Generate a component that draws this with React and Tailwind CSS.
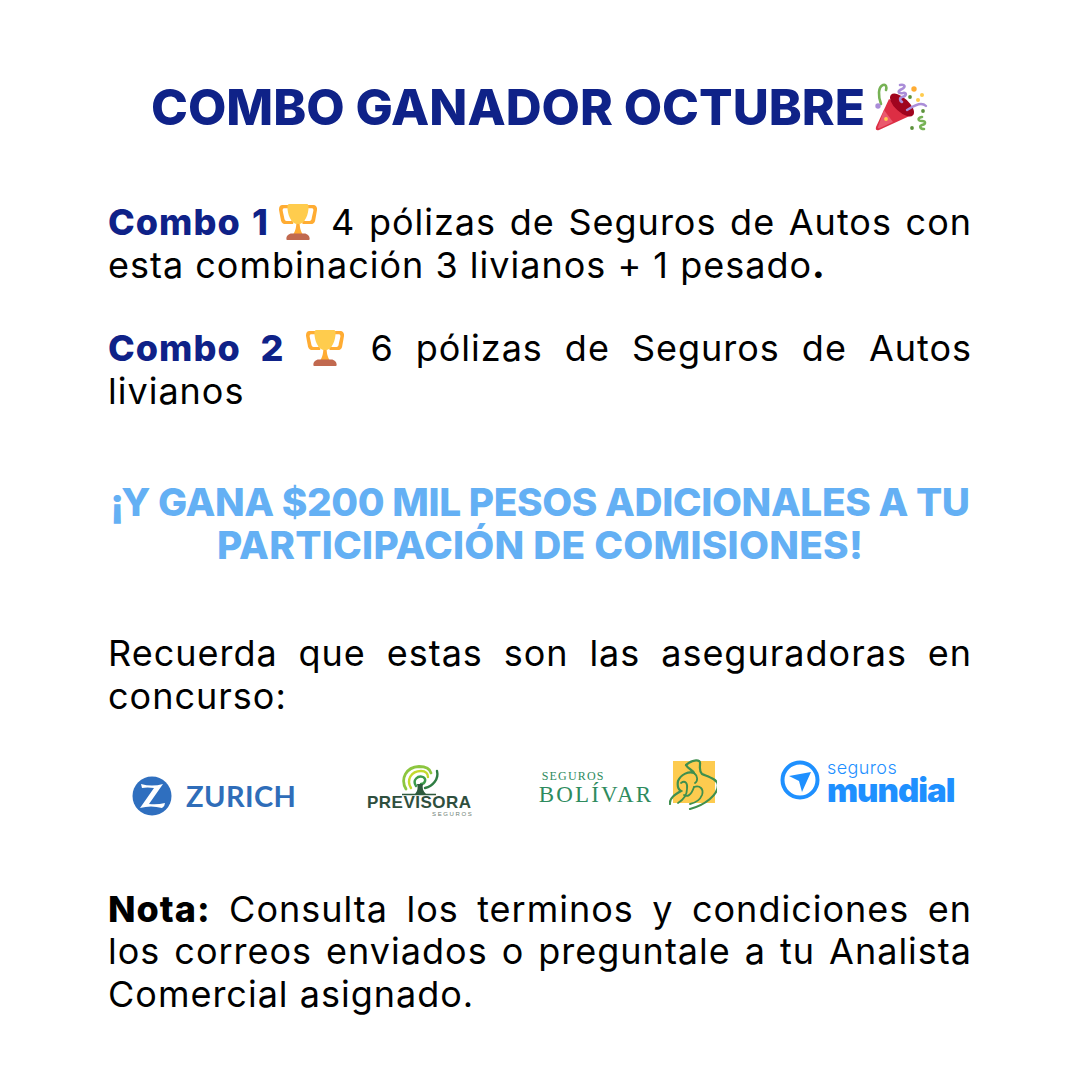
const Trophy = ({ className }) => (
  <svg viewBox="0 0 36 36" className={className}>
    <path fill="#FFAC33" d="M5.123 5h6C12.227 5 13 4.896 13 6V4c0-1.104-.773-2-1.877-2h-8c-2 0-3.583 2.125-3 5 0 0 1.791 9.375 1.917 9.958C2.373 18.5 4.164 20 6.081 20h6.958c1.105 0-.039-1.896-.039-3v-2c0 1.104-.773 2-1.877 2h-4c-1.104 0-1.833-1.042-2-2S3.539 7.667 3.539 7.667C3.206 5.75 4.018 5 5.123 5zm25.812 0h-6C23.831 5 22 4.896 22 6V4c0-1.104 1.831-2 2.935-2h8c2 0 3.584 2.125 3 5 0 0-1.633 9.419-1.771 10-.354 1.5-2.042 3-4 3h-7.146C21.914 20 22 18.104 22 17v-2c0 1.104 1.831 2 2.935 2h4c1.104 0 1.834-1.042 2-2s1.584-7.333 1.584-7.333C32.851 5.75 32.04 5 30.935 5z" />
    <path fill="#FFAC33" d="M23 30c-3-3-3.5-9-3.5-13h-3c0 4-.5 10-3.500 13z" />
    <path fill="#FFCC4D" d="M28 4c0-1.104.06-3-2-3H10C8 1 8 2.896 8 4c0 6 3 16 10 16s10-10 10-16z" />
    <path fill="#C1694F" d="M29 33.500c0 1.104.227 1.500-.877 1.500H7.877C6.800 35 7 34.604 7 33.500c0-2.200 2.400-4.500 5-4.500h12c2.600 0 5 2.300 5 4.500z" />
  </svg>
);

const Popper = ({ className }) => (
  <svg viewBox="0 0 54 50" className={className}>
    <path fill="#DD2E44" d="M14 17 L1 45 Q0 49 4 48 L39 32 Z" />
    <path fill="#EA596E" d="M9 28 L3 45 Q2 47 5 46 L18 40 Z" />
    <ellipse cx="27" cy="23" rx="7" ry="15" transform="rotate(-47 27 23)" fill="#A0041E" />
    <path fill="none" stroke="#77B255" strokeWidth="2.6" strokeLinecap="round" d="M6 22 C3 14 3 5 8 3 C11 2 12 5 11 8" />
    <circle cx="3" cy="24" r="2.7" fill="#AA8DD8" />
    <circle cx="11" cy="37" r="1.9" fill="#FFCC4D" />
    <path fill="none" stroke="#AA8DD8" strokeWidth="2.6" strokeLinecap="round" d="M25 3 C30 2 31 5 27 7 C22 9 23 12 28 11 C32 10 32 14 27 15 C24 16 25 19 27 20" />
    <circle cx="39" cy="7" r="2.7" fill="#FFAC33" />
    <circle cx="47" cy="13" r="2" fill="#FFCC4D" />
    <circle cx="43" cy="18" r="2" fill="#FFCC4D" />
    <circle cx="35" cy="15" r="1.9" fill="#5C913B" />
    <circle cx="48" cy="29" r="1.9" fill="#5C913B" />
    <circle cx="37" cy="46" r="1.9" fill="#5C913B" />
    <path fill="none" stroke="#AA8DD8" strokeWidth="2.4" strokeLinecap="round" d="M32 28 C37 25 41 22 46 22 C49 22 50 23 51 24" />
    <path fill="none" stroke="#77B255" strokeWidth="2.6" strokeLinecap="round" d="M47 35 C42 36 43 39 47 39 C51 39 51 42 47 43 C44 44 45 47 49 47" />
  </svg>
);

const Zurich = () => (
  <div className="flex items-center w-[170px] h-[40px]">
    <svg viewBox="0 0 40 40" className="w-[40px] h-[40px] shrink-0">
      <circle cx="20" cy="20" r="19.5" fill="#2F6FBF" />
      <path fill="#fff" d="M9 8 Q20 11 31 8 L17 28 Q25 29 33 27 Q33 30 30 32 Q19 29 8 32 L22 12 Q15 11 10 12 Z" />
    </svg>
    <span className="ml-[14px] text-[29px] leading-none font-bold text-[#2F6DB9] tracking-[0.4px] font-['Lato',sans-serif]">ZURICH</span>
  </div>
);

const Previsora = () => (
  <div className="flex flex-col items-center w-[108px] h-[54px]">
    <svg viewBox="0 0 44 31" className="w-[44px] h-[31px] shrink-0">
      <path fill="none" stroke="#8CC63F" strokeWidth="2.8" strokeLinecap="round" d="M9 24 C3 14 9 2 22 1.5 C29 1.5 33 4 34 8" />
      <path fill="none" stroke="#C3D82E" strokeWidth="2.4" strokeLinecap="round" d="M14 23 C9 15 14 6 24 6 C29 6 31 9 31 12" />
      <path fill="none" stroke="#2F7D43" strokeWidth="2.4" strokeLinecap="round" d="M40 6 C42 14 36 21 28 23" />
      <path fill="none" stroke="#3C9A4A" strokeWidth="2.4" strokeLinecap="round" d="M19 21 C15 15 21 10 26 12 C30 14 28 19 24 19" />
      <path fill="#2E5A3C" d="M18 29 C21 26 21 22 20 19 L26 19 C25 23 26 26 29 29 Z" />
      <path stroke="#2E5A3C" strokeWidth="1.3" d="M5 29.5 H39" />
    </svg>
    <span className="text-[17px] leading-[14px] tracking-[0.5px] font-bold text-[#2F4F3E] font-['Liberation_Sans',sans-serif] whitespace-nowrap">PREVISORA</span>
    <span className="self-end text-[6px] leading-[8px] tracking-[1.6px] text-[#6F7F75] font-['Liberation_Sans',sans-serif]">SEGUROS</span>
  </div>
);

const Bolivar = () => (
  <div className="flex items-start w-[178px] h-[52px]">
    <div className="flex flex-col w-[130px] pt-[10px] font-['Liberation_Serif',serif] text-[#2E8B5E]">
      <span className="text-[12px] leading-[14px] tracking-[1.2px] pl-[3px]">SEGUROS</span>
      <span className="text-[23px] leading-[24px] tracking-[2.2px]">BOLÍVAR</span>
    </div>
    <svg viewBox="0 0 48 52" className="w-[48px] h-[52px] shrink-0">
      <path fill="#FDCB4F" d="M4 2 H46 V44 H4 Z" />
      <g fill="none" stroke="#3F8F4E" strokeWidth="1.8" strokeLinecap="round">
        <path d="M17 6 C24 0 32 0 31 5 C31 10 30 12 33 15 C40 18 48 20 49 26 C49 36 36 46 21 50" strokeWidth="2.2" />
        <path d="M17 6 C19 10 24 11 25 14 C20 12 12 15 9 22 C8 28 10 31 12 32 C7 35 0 39 1 45" strokeWidth="2.2" />
        <path d="M25 14 C29 17 29 22 26 24" />
        <path d="M12 24 C16 21 19 24 18 30 C18 36 14 41 9 44" />
        <path d="M25 28 C31 26 35 30 33 36 C31 41 26 44 21 45" />
        <path d="M15 36 C18 38 22 37 25 28" />
      </g>
    </svg>
  </div>
);

const Mundial = () => (
  <div className="flex items-start w-[176px] h-[46px] text-[#1E90FF]">
    <svg viewBox="0 0 40 40" className="w-[40px] h-[40px] shrink-0">
      <circle cx="20" cy="20" r="17.5" fill="none" stroke="#1E90FF" strokeWidth="4" />
      <path fill="#1E90FF" d="M9 16 L31 12 L22 32 L19 21 Z" />
    </svg>
    <div className="flex flex-col ml-[7px] font-['Inter',sans-serif]">
      <span className="text-[18px] leading-[15px] font-light tracking-[0.4px]">seguros</span>
      <span className="text-[33px] leading-[30px] font-black tracking-[-1px]">mundial</span>
    </div>
  </div>
);

const Line = ({ children }) => <span className="block [text-align-last:justify]">{children}</span>;

export default function App() {
  return (
    <div className="w-[1080px] h-[1080px] bg-white px-[108px] pt-[76px] text-black font-['Inter',sans-serif] text-[36px] leading-[42.6px] tracking-[1px]">
      <div className="flex items-center justify-center -mx-[20px] h-[62px]">
        <h1 className="text-[49.7px] leading-[62px] font-extrabold text-[#0F2288] tracking-[0px] whitespace-nowrap">COMBO GANADOR OCTUBRE</h1>
        <Popper className="w-[54px] h-[50px] ml-[10px] -mt-[1px] shrink-0" />
      </div>

      <p className="mt-[63px]">
        <Line>
          <b className="font-extrabold text-[#0F2288]">Combo 1</b>
          <Trophy className="inline-block w-[38px] h-[38px] ml-[10px] mr-[14px] align-[-6px]" />
          4 pólizas de Seguros de Autos con
        </Line>
        esta combinación 3 livianos + 1 pesado<b className="font-extrabold">.</b>
      </p>

      <p className="mt-[41px]">
        <Line>
          <b className="font-extrabold text-[#0F2288]">Combo 2</b>{" "}
          <Trophy className="inline-block w-[38px] h-[38px] mr-[4px] align-[-6px]" />{" "}
          6 pólizas de Seguros de Autos
        </Line>
        livianos
      </p>

      <h2 className="mt-[68px] text-center text-[#64B0F4] text-[38.8px] leading-[43px] font-extrabold tracking-[-0.4px] -mx-[10px]">
        <span className="block">¡Y GANA $200 MIL PESOS ADICIONALES A TU</span>
        <span className="block tracking-[0.25px]">PARTICIPACIÓN DE COMISIONES!</span>
      </h2>

      <p className="mt-[66px]">
        <Line>Recuerda que estas son las aseguradoras en</Line>
        concurso:
      </p>

      <div className="mt-[46px] -mx-[4px] pl-[28px] pr-[20px] h-[64px] flex items-start justify-between">
        <div className="mt-[12px]"><Zurich /></div>
        <div className="mt-[1px]"><Previsora /></div>
        <div className="-mt-[5px] ml-[2px]"><Bolivar /></div>
        <div className="-mt-[4px]"><Mundial /></div>
      </div>

      <p className="mt-[60px]">
        <Line><b className="font-extrabold">Nota:</b> Consulta los terminos y condiciones en</Line>
        <Line>los correos enviados o preguntale a tu Analista</Line>
        Comercial asignado.
      </p>
    </div>
  );
}
